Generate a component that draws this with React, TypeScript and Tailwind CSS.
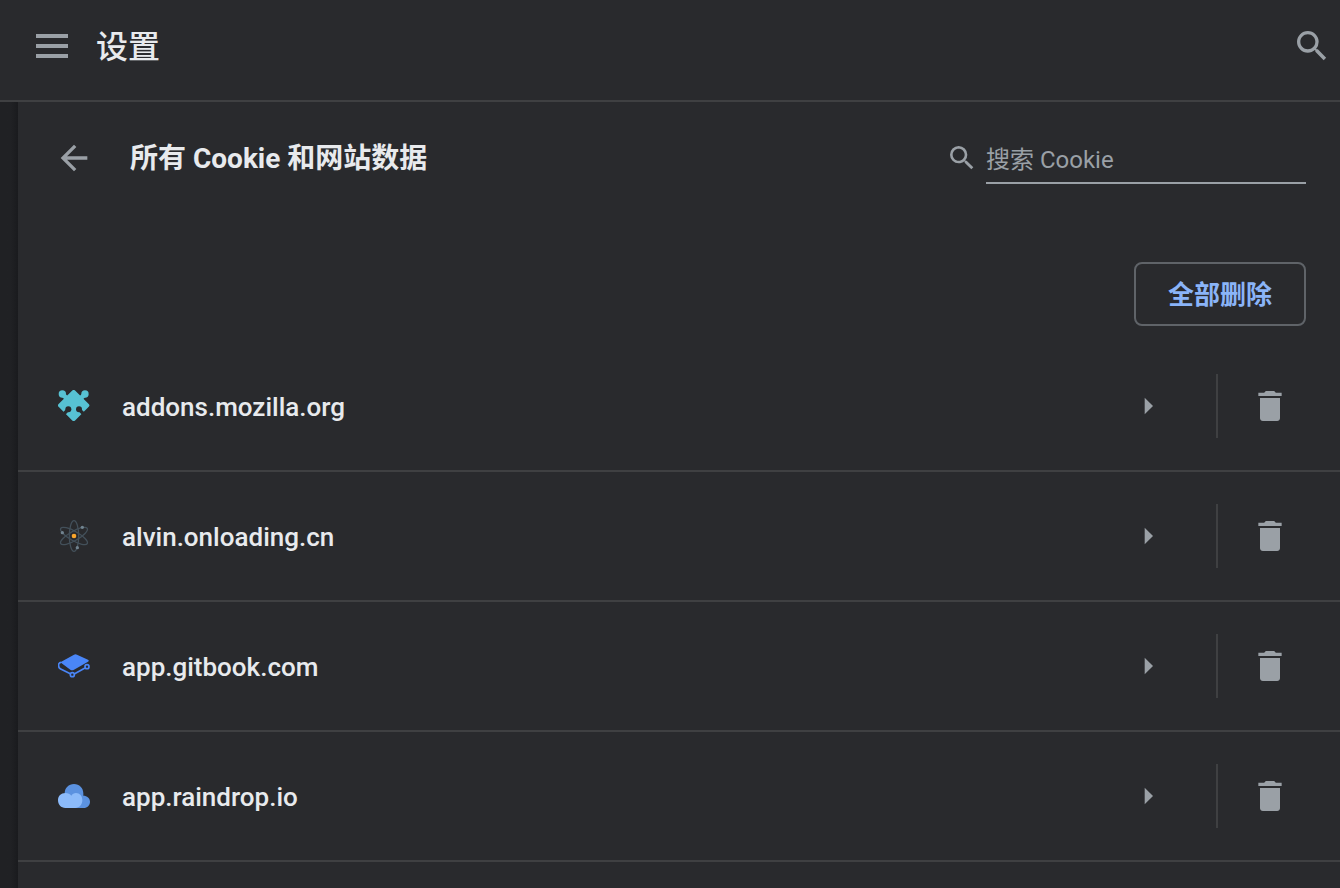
import type { ReactNode } from "react";

function MaterialIcon({ d, className }: { d: string; className: string }) {
  return (
    <svg viewBox="0 0 24 24" fill="currentColor" aria-hidden="true" className={className}>
      <path d={d} />
    </svg>
  );
}

const SEARCH =
  "M15.5 14h-.79l-.28-.27A6.471 6.471 0 0 0 16 9.5 6.5 6.5 0 1 0 9.5 16c1.61 0 3.09-.59 4.23-1.57l.27.28v.79l5 4.99L20.49 19l-4.99-5zm-6 0C7.01 14 5 11.99 5 9.5S7.01 5 9.5 5 14 7.01 14 9.5 11.99 14 9.5 14z";
const BACK = "M20 11H7.83l5.59-5.59L12 4l-8 8 8 8 1.41-1.41L7.83 13H20v-2z";
const ARROW = "M10 17l5-5-5-5z";
const TRASH =
  "M6 19.3c0 .95.75 1.7 1.7 1.7h8.6c.95 0 1.7-.75 1.7-1.7V7.2H6v12.1zM19 4h-3.5l-1-1h-5l-1 1H5v2h14V4z";

function Puzzle() {
  return (
    <svg viewBox="0 0 96 96" aria-hidden="true" className="size-8">
      <mask id="puzzle-notches">
        <path d="M0 0h96v96H0z" fill="#fff" />
        <circle cx="31" cy="58" r="9" fill="#000" />
        <circle cx="63" cy="58" r="9" fill="#000" />
        <path d="M31 58L17 72M63 58l14 14" stroke="#000" strokeWidth="10" />
      </mask>
      <g fill="#57c2d3" stroke="#57c2d3">
        <path
          d="M47 6L88 46 47 87 6 46z"
          strokeWidth="12"
          strokeLinejoin="round"
          mask="url(#puzzle-notches)"
        />
        <circle cx="13" cy="12" r="11" stroke="none" />
        <circle cx="81" cy="12" r="11" stroke="none" />
        <path d="M14 13l16 16M80 13L64 29" strokeWidth="14" />
      </g>
    </svg>
  );
}

function Atom() {
  return (
    <svg viewBox="0 0 96 96" fill="none" stroke="#43505a" strokeWidth="4" aria-hidden="true" className="size-8">
      <ellipse cx="48" cy="48" rx="14" ry="46" />
      <ellipse cx="48" cy="48" rx="14" ry="46" transform="rotate(60 48 48)" />
      <ellipse cx="48" cy="48" rx="14" ry="46" transform="rotate(120 48 48)" />
      <g stroke="none">
        <circle cx="73" cy="22" r="5" fill="#71838f" />
        <circle cx="13" cy="38" r="5" fill="#71838f" />
        <circle cx="58" cy="83" r="5" fill="#71838f" />
        <circle cx="48" cy="48" r="7" fill="#f9a52b" />
      </g>
    </svg>
  );
}

function Book() {
  return (
    <svg viewBox="0 0 96 96" fill="none" stroke="#4a86f7" aria-hidden="true" className="size-8">
      <path
        d="M7 37L48 14c3-2 6-2 9 0l33 15c3 2 3 4 0 6L48 59c-4 2-7 2-11 0z"
        fill="#4a86f7"
        stroke="none"
      />
      <path
        d="M9 37C3 38 1 43 2 48c0 5 2 7 6 9l29 14M50 71l31-17"
        strokeWidth="5"
        strokeLinejoin="round"
      />
      <circle cx="43" cy="74" r="6" strokeWidth="5" />
      <circle cx="87" cy="50" r="6" strokeWidth="5" />
    </svg>
  );
}

function Cloud() {
  return (
    <svg viewBox="0 0 96 96" aria-hidden="true" className="size-8">
      <path
        fill="#5b92e0"
        d="M20 40C20 24 32 12 48 12s28 12 28 28v7c11 0 20 7 20 18 0 10-8 19-19 19H40z"
      />
      <path
        fill="#8cbbfa"
        d="M22 39c8 0 14 3 18 8 3-5 8-8 14-8 11 0 19 9 19 22S64 84 52 84H22C9 84 0 74 0 61s9-22 22-22z"
      />
    </svg>
  );
}

const SITES: { name: string; icon: ReactNode }[] = [
  { name: "addons.mozilla.org", icon: <Puzzle /> },
  { name: "alvin.onloading.cn", icon: <Atom /> },
  { name: "app.gitbook.com", icon: <Book /> },
  { name: "app.raindrop.io", icon: <Cloud /> },
];

export default function App() {
  return (
    <div className="flex min-h-screen flex-col bg-[#292a2d] font-['Roboto','Noto_Sans_CJK_SC',sans-serif] text-[#e8eaed]">
      <header className="flex items-start border-b-2 border-[#3f4042] pt-[26px] pr-2 pb-8 pl-9">
        <button type="button" aria-label="菜单" className="flex h-10 items-center text-[#9aa0a6]">
          <svg viewBox="0 0 32 24" fill="currentColor" aria-hidden="true" className="h-6 w-8">
            <path d="M0 0h32v4H0zM0 10h32v4H0zM0 20h32v4H0z" />
          </svg>
        </button>
        <h1 className="ml-7 flex-1 font-['Roboto','Noto_Sans_CJK_SC_Medium','Noto_Sans_CJK_SC',sans-serif] text-[32px] leading-[42px] font-medium">
          设置
        </h1>
        <button type="button" aria-label="搜索设置" className="text-[#9aa0a6]">
          <MaterialIcon d={SEARCH} className="size-10" />
        </button>
      </header>

      <div className="flex flex-1">
        <div className="w-[18px] shrink-0 bg-linear-to-r from-[#202124] from-60% to-[#1a1b1e]" />
        <main className="min-w-0 flex-1">
          <div className="flex h-28 items-center pr-[34px] pl-9">
            <button type="button" aria-label="返回" className="text-[#9aa0a6]">
              <MaterialIcon d={BACK} className="size-10" />
            </button>
            <h2 className="ml-9 flex-1 pt-0.5 text-[28px] leading-10 font-bold">所有 Cookie 和网站数据</h2>
            <label htmlFor="cookie-search" className="mr-2 text-[#9aa0a6]">
              <MaterialIcon d={SEARCH} className="size-8" />
            </label>
            <input
              id="cookie-search"
              type="text"
              aria-label="搜索 Cookie"
              placeholder="搜索 Cookie"
              className="h-[52px] w-80 border-b-2 border-[#9aa0a6] bg-transparent pt-1.5 text-2xl outline-none placeholder:text-[#9aa0a6]"
            />
          </div>

          <div className="flex justify-end pt-12 pr-[34px] pb-4">
            <button
              type="button"
              className="h-16 rounded-lg border-2 border-[#5f6368] px-8 pt-0.5 text-[26px] font-bold text-[#8ab4f8]"
            >
              全部删除
            </button>
          </div>

          <ul>
            {SITES.map((site) => (
              <li
                key={site.name}
                className="flex items-center border-b-2 border-[#3f4042] py-8 pr-[50px] pl-10"
              >
                {site.icon}
                <span className="ml-8 flex-1 pt-0.5 text-[26px] leading-8 font-medium">{site.name}</span>
                <button type="button" aria-label={`查看 ${site.name}`} className="text-[#9aa0a6]">
                  <MaterialIcon d={ARROW} className="size-10" />
                </button>
                <div className="mr-8 ml-12 h-16 w-0.5 bg-[#3f4042]" />
                <button type="button" aria-label={`删除 ${site.name}`} className="text-[#9aa0a6]">
                  <MaterialIcon d={TRASH} className="size-10" />
                </button>
              </li>
            ))}
          </ul>
        </main>
      </div>
    </div>
  );
}
